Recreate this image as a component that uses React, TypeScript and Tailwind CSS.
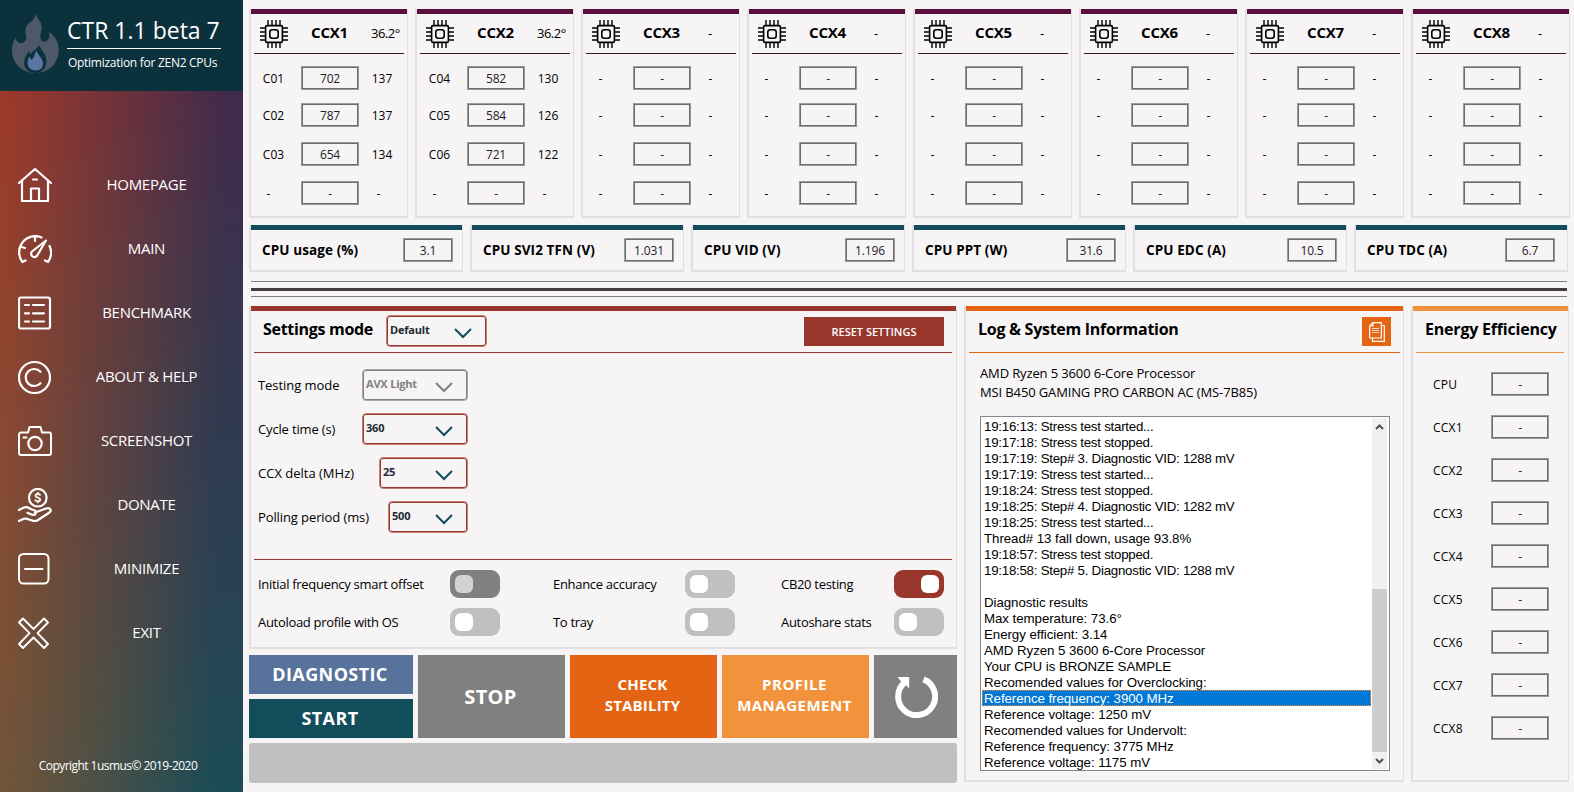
import React from "react";

type Core = { name: string; freq: string; load: string };

const EMPTY: Core = { name: "-", freq: "-", load: "-" };

const ccxList: { title: string; temp: string; cores: Core[] }[] = [
  {
    title: "CCX1",
    temp: "36.2°",
    cores: [
      { name: "C01", freq: "702", load: "137" },
      { name: "C02", freq: "787", load: "137" },
      { name: "C03", freq: "654", load: "134" },
      EMPTY,
    ],
  },
  {
    title: "CCX2",
    temp: "36.2°",
    cores: [
      { name: "C04", freq: "582", load: "130" },
      { name: "C05", freq: "584", load: "126" },
      { name: "C06", freq: "721", load: "122" },
      EMPTY,
    ],
  },
  ...["CCX3", "CCX4", "CCX5", "CCX6", "CCX7", "CCX8"].map((title) => ({
    title,
    temp: "-",
    cores: [EMPTY, EMPTY, EMPTY, EMPTY],
  })),
];

const sensors = [
  { label: "CPU usage (%)", value: "3.1" },
  { label: "CPU SVI2 TFN (V)", value: "1.031" },
  { label: "CPU VID (V)", value: "1.196" },
  { label: "CPU PPT (W)", value: "31.6" },
  { label: "CPU EDC (A)", value: "10.5" },
  { label: "CPU TDC (A)", value: "6.7" },
];

const logLines = [
  "19:16:13: Stress test started...",
  "19:17:18: Stress test stopped.",
  "19:17:19: Step# 3. Diagnostic VID: 1288 mV",
  "19:17:19: Stress test started...",
  "19:18:24: Stress test stopped.",
  "19:18:25: Step# 4. Diagnostic VID: 1282 mV",
  "19:18:25: Stress test started...",
  "Thread# 13 fall down, usage 93.8%",
  "19:18:57: Stress test stopped.",
  "19:18:58: Step# 5. Diagnostic VID: 1288 mV",
  "",
  "Diagnostic results",
  "Max temperature: 73.6°",
  "Energy efficient: 3.14",
  "AMD Ryzen 5 3600 6-Core Processor",
  "Your CPU is BRONZE SAMPLE",
  "Recomended values for Overclocking:",
  "Reference frequency: 3900 MHz",
  "Reference voltage: 1250 mV",
  "Recomended values for Undervolt:",
  "Reference frequency: 3775 MHz",
  "Reference voltage: 1175 mV",
];
const selectedLine = 17;

const NavIcon = ({ children }: { children: React.ReactNode }) => (
  <svg
    className="w-[34px] h-[34px] shrink-0"
    viewBox="0 0 34 34"
    fill="none"
    stroke="white"
    strokeWidth="2.2"
    strokeLinecap="round"
    strokeLinejoin="round"
  >
    {children}
  </svg>
);

const navItems = [
  {
    label: "HOMEPAGE",
    icon: (
      <NavIcon>
        <path d="M1 15 17 1l16 14M4 13v20h26V13M13 33V20.5h8V33M15 11.5h4" />
      </NavIcon>
    ),
  },
  {
    label: "MAIN",
    icon: (
      <NavIcon>
        <path d="M23.5 5.5A16 16 0 0 0 4.5 30l3-1.5M31.5 14a16 16 0 0 1-1.5 16l-3-1.5M17 5v4M3.5 15l3.5 1" />
        <path d="M28 8.500 14 19.500a3.300 3.300 0 1 0 5 4.300Z" />
      </NavIcon>
    ),
  },
  {
    label: "BENCHMARK",
    icon: (
      <NavIcon>
        <rect x="1" y="1.5" width="31" height="31" rx="2" />
        <path d="M7 9h4M15 9h11M7 17.3h4M15 17.3h11M7 25.5h4M15 25.5h11" />
      </NavIcon>
    ),
  },
  {
    label: "ABOUT & HELP",
    icon: (
      <NavIcon>
        <circle cx="16.5" cy="17.5" r="15.5" />
        <path d="M22.5 11.8a8.5 8.5 0 1 0 0 11.4" />
      </NavIcon>
    ),
  },
  {
    label: "SCREENSHOT",
    icon: (
      <NavIcon>
        <path
          d="M3 8.5h7l1.500-5.500h11L24 8.500h7a2 2 0 0 1 2 2V29a2 2 0 0 1-2 2H3a2 2 0 0 1-2-2V10.500a2 2 0 0 1 2-2ZM5.500 13.500h3"
          strokeWidth="2"
        />
        <circle cx="17" cy="19.5" r="6.7" />
      </NavIcon>
    ),
  },
  {
    label: "DONATE",
    icon: (
      <NavIcon>
        <circle cx="19.8" cy="9.7" r="8.8" />
        <path
          d="M22 6.800c-1-1.200-4.500-1.200-4.500.9 0 2.300 4.700 1.400 4.700 3.800 0 2.200-3.700 2.200-4.900.7M19.800 4.800v1.100M19.800 13.100v1.200"
          strokeWidth="1.8"
        />
        <path d="M.8 22 6 19.500c4-1.500 6 2 9.500 2.500 3 .3 3 4.500 0 4.800-2 .1-4-1-6-2M17 24.500l11-4c4-1.500 6 2 3.500 4L20 32c-2 1.200-4 1.300-6 .5-4-1.500-6-2.500-8-1.800L.8 33" />
      </NavIcon>
    ),
  },
  {
    label: "MINIMIZE",
    icon: (
      <NavIcon>
        <rect x="1" y="2" width="29.5" height="29.5" rx="4.5" strokeWidth="2" />
        <path d="M7 17h17.5" strokeWidth="2" />
      </NavIcon>
    ),
  },
  {
    label: "EXIT",
    icon: (
      <NavIcon>
        <path
          d="M1 6.500 5 2.500 15.500 13 26 2.500l4 4L19.500 17.200 30 28l-4 4L15.500 21.500 5 32l-4-4L11.500 17.200Z"
          strokeWidth="1.9"
        />
      </NavIcon>
    ),
  },
];

const Flame = () => (
  <svg className="w-[47px] h-[60px] shrink-0" viewBox="0 0 47 60">
    <path
      d="M23.500 0c1 6 6.500 8 6.300 15-.1 3-1.800 6-1.500 10 .3 3 3.500 4.500 6.200 3 2.500-1.500 3.500-5 2.500-9 6 4 9.700 10.500 9.700 18C46.700 50 37 60 23.400 60S0 50 0 37.500C0 32 1.500 27.500 4 24.500c0 4 2.500 6 5.500 5.500 4-.6 5.500-4 4.500-7.500C12 15 15 11.500 18.500 9c3-2.200 5-5 5-9Z"
      fill="#4d5968"
    />
    <path
      d="M27.500 32c.3 4 4.500 6.500 6 11 3 9-2 17-10 17s-13.500-6-10.500-15c.8-2.500 2.500-3.500 3.200-6.500 1.300.8 2 1.700 2.500 2.800C20 38 24 37 27.500 32Z"
      fill="#0b313c"
    />
    <path
      d="M24.500 37c0 4 6.500 8 6.500 13.500 0 4.500-3 7-7.500 7S15.500 54.500 15.500 50c0-2.500 1-4 1.500-6.500 1.500.7 2 2 2 3.500 3-1.500 3.500-5.500 5.500-10Z"
      fill="#5b76a3"
    />
  </svg>
);

const ChipIcon = () => (
  <svg className="w-7 h-7 shrink-0" viewBox="0 0 28 28" fill="none" stroke="black" strokeWidth="1.6">
    <rect x="5.6" y="5.6" width="16.8" height="16.8" rx="1.5" />
    <rect x="9.8" y="9.8" width="8.4" height="8.4" rx="2.4" />
    <path
      d="M8 0v5M12 0v5M16 0v5M20 0v5M8 23v5M12 23v5M16 23v5M20 23v5"
      strokeWidth="1.4"
    />
    <path
      d="M0 8h5M0 12h5M0 16h5M0 20h5M23 8h5M23 12h5M23 16h5M23 20h5"
      strokeWidth="1.4"
    />
  </svg>
);

const ValueBox = ({ className = "", children }: { className?: string; children: React.ReactNode }) => (
  <span
    className={`h-6 flex items-center justify-center border border-[#9a9a9a] inset-ring inset-ring-[#6c6c6c] pt-px text-[12px] font-medium tracking-[-0.15px] text-[#1c2228] ${className}`}
  >
    {children}
  </span>
);

const Panel = ({
  bar,
  className = "",
  children,
}: {
  bar: string;
  className?: string;
  children: React.ReactNode;
}) => (
  <section className={`flex flex-col border-l-2 border-r border-b-2 border-[#e1dfe1] ${className}`}>
    <div className={`h-[5px] shrink-0 ${bar}`} />
    {children}
  </section>
);

const Select = ({
  value,
  className,
  disabled = false,
}: {
  value: string;
  className: string;
  disabled?: boolean;
}) => (
  <div
    className={`h-8 flex items-center justify-between pl-[3px] pr-[14px] rounded-[4px] border inset-ring ${
      disabled
        ? "border-[#a8a8a8] inset-ring-[#808080] text-[#808080]"
        : "border-[#c27f77] inset-ring-[#98362b] text-[#222a33]"
    } ${className}`}
  >
    <span className="text-[11px] font-bold leading-4 pb-[2px] tracking-[-0.2px]">{value}</span>
    <svg
      className={`w-[18px] h-[11px] mt-1 ${disabled ? "text-[#808080]" : "text-[#114d5c]"}`}
      viewBox="0 0 18 11"
      fill="none"
      stroke="currentColor"
      strokeWidth="2"
    >
      <path d="M1 1l8 8 8-8" />
    </svg>
  </div>
);

const Toggle = ({ label, state = "off" }: { label: string; state?: "off" | "on" | "disabled" }) => (
  <div className="flex items-center justify-between h-7">
    <span className="pt-[2px] text-[13px] tracking-[-0.3px]">{label}</span>
    <span
      className={`w-[50px] h-7 rounded-[9px] p-[5px] flex ${
        state === "on" ? "bg-[#98362b] justify-end" : state === "disabled" ? "bg-[#808080]" : "bg-[#c0c0c0]"
      }`}
    >
      <span className={`w-[18px] h-[18px] rounded-[6px] ${state === "disabled" ? "bg-[#d3d3d3]" : "bg-white"}`} />
    </span>
  </div>
);

const Sidebar = () => (
  <aside className="w-[243px] shrink-0 flex flex-col text-white">
    <div className="h-[91px] shrink-0 bg-[#0b313c] flex pl-3 pt-[13px] gap-2">
      <Flame />
      <div className="w-[154px]">
        <h1 className="text-[23px] leading-[35px] h-9 border-b border-white whitespace-nowrap">
          CTR 1.1 beta 7
        </h1>
        <p className="text-[12px] leading-[17px] mt-[5px] pl-px tracking-[-0.28px] whitespace-nowrap">
          Optimization for ZEN2 CPUs
        </p>
      </div>
    </div>

    <div className="relative flex-1 bg-linear-to-b from-[#a0392a] to-[#785636]">
      {/* cool tint fading in towards the right edge */}
      <div className="absolute inset-0 bg-linear-to-b from-[#432b4b] via-[#2f3b50] to-[#1b4c57] [mask-image:linear-gradient(91deg,transparent,black_88%)]" />
      <div className="relative h-full flex flex-col pt-[62px]">
        <nav className="flex flex-col">
          {navItems.map((item) => (
            <a key={item.label} className="h-16 flex items-center pl-[18px]">
              {item.icon}
              <span className="w-[189px] pb-[2px] text-center text-[15px] tracking-[-0.3px]">{item.label}</span>
            </a>
          ))}
        </nav>
        <p className="mt-auto mb-[17px] text-center pr-[7px] text-[12px] leading-[18px] tracking-[-0.55px]">
          Copyright 1usmus© 2019-2020
        </p>
      </div>
    </div>
  </aside>
);

const CcxCard = ({ title, temp, cores }: (typeof ccxList)[number]) => (
  <Panel bar="bg-[#5c0f3e]" className="w-[159px] h-[209px]">
    <div className="mx-[3px] h-10 shrink-0 border-b border-[#3f1230] flex items-center pl-[6px]">
      <ChipIcon />
      <h2 className="w-[83px] mr-[2px] pb-[2px] text-center text-[15px] font-bold tracking-[-0.2px]">{title}</h2>
      <span className={`text-[13px] tracking-[-0.5px] ${temp === "-" ? "pl-[3px]" : "-ml-[2px]"}`}>{temp}</span>
    </div>
    <div className="grid grid-rows-[37px_39px_39px_24px] pt-3 pl-2">
      {cores.map((core, i) => (
        <div key={i} className="flex items-center h-6">
          <span className={`pt-[2px] text-[12px] text-center ${core.name === "-" ? "w-[19px]" : "w-[29px]"}`}>
            {core.name}
          </span>
          <ValueBox className={`w-[58px] ${core.name === "-" ? "ml-[23px]" : "ml-[13px]"}`}>{core.freq}</ValueBox>
          <span className={`pt-[2px] text-[12px] text-center ${core.load === "-" ? "w-[39px]" : "w-[46px]"}`}>
            {core.load}
          </span>
        </div>
      ))}
    </div>
  </Panel>
);

const SettingsPanel = () => (
  <Panel bar="bg-[#98362b]" className="h-[343px]">
    <div className="ml-[3px] mr-[4px] h-[42px] shrink-0 border-b border-[#98362b] flex items-center pl-[9px] pr-2">
      <h2 className="text-[16px] font-bold tracking-[-0.3px] w-[123px] pb-[5px] whitespace-nowrap">Settings mode</h2>
      <Select value="Default" className="w-[101px] mb-px" />
      <button className="ml-auto w-[140px] h-[29px] pt-px bg-[#98362b] text-white text-[11px] font-semibold">
        RESET SETTINGS
      </button>
    </div>

    <div className="flex flex-col gap-3 pt-4 pl-[7px] w-[217px] text-[13px]">
      <div className="flex items-center justify-between">
        <span className="pt-[2px] tracking-[-0.05px]">Testing mode</span>
        <Select value="AVX Light" className="w-[106px]" disabled />
      </div>
      <div className="flex items-center justify-between">
        <span className="pt-[2px] tracking-[-0.15px]">Cycle time (s)</span>
        <Select value="360" className="w-[106px]" />
      </div>
      <div className="flex items-center justify-between">
        <span className="pt-[2px]">CCX delta (MHz)</span>
        <Select value="25" className="w-[89px]" />
      </div>
      <div className="flex items-center justify-between">
        <span className="pt-[2px] tracking-[-0.1px]">Polling period (ms)</span>
        <Select value="500" className="w-[80px]" />
      </div>
    </div>

    <div className="ml-[3px] mr-[4px] mt-[26px] border-t border-[#98362b]" />
    <div className="flex pl-[7px] pt-[10px]">
      <div className="w-[242px] mr-[53px] flex flex-col gap-[10px]">
        <Toggle label="Initial frequency smart offset" state="disabled" />
        <Toggle label="Autoload profile with OS" />
      </div>
      <div className="w-[182px] mr-[46px] flex flex-col gap-[10px]">
        <Toggle label="Enhance accuracy" />
        <Toggle label="To tray" />
      </div>
      <div className="w-[163px] flex flex-col gap-[10px]">
        <Toggle label="CB20 testing" state="on" />
        <Toggle label="Autoshare stats" />
      </div>
    </div>
  </Panel>
);

const Actions = () => (
  <div className="mt-[6px] h-[83px] flex gap-[5px] text-white font-bold">
    <div className="w-[164px] flex flex-col gap-[5px] text-[18px] tracking-[0.4px]">
      <button className="h-[39px] pr-[2px] bg-[#58739b]">DIAGNOSTIC</button>
      <button className="h-[39px] pr-[2px] bg-[#114d5b]">START</button>
    </div>
    <button className="w-[147px] pr-[2px] bg-[#808080] text-[20px] tracking-[0.3px]">STOP</button>
    <button className="w-[147px] pr-[2px] pb-[3px] bg-[#e46414] text-[15px] tracking-[0.2px] leading-[21px]">
      CHECK
      <br />
      STABILITY
    </button>
    <button className="w-[147px] pr-[2px] pb-[3px] bg-[#f2923c] text-[15px] tracking-[0.5px] leading-[21px]">
      PROFILE
      <br />
      MANAGEMENT
    </button>
    <button className="w-[83px] bg-[#808080] flex items-center justify-center pl-[2px]">
      <svg className="w-[43px] h-[43px]" viewBox="0 0 43 43">
        <path d="M28.5 4.4A18.5 18.5 0 1 1 10 7.2" fill="none" stroke="white" strokeWidth="6" />
        <path d="M2.5 2h11.7v11.5L10.5 9.500 6.5 7Z" fill="white" />
      </svg>
    </button>
  </div>
);

const LogPanel = () => (
  <Panel bar="bg-[#e46414]" className="w-[440px] h-[476px]">
    <div className="mx-[3px] h-[42px] shrink-0 border-b border-[#e46414] flex items-center justify-between pl-[9px] pr-[9px]">
      <h2 className="text-[16px] font-bold tracking-[-0.28px] pb-[5px]">Log &amp; System Information</h2>
      <button className="w-[29px] h-[29px] bg-[#e46414] flex items-center justify-center">
        <svg className="w-4 h-5" viewBox="0 0 16 20" fill="none" stroke="white" strokeWidth="1.2">
          <path d="M4 .7h8.300V16H.700V4Z" />
          <path d="M.7 4H4V.7M12.500 3.500h2.800v15.800H3.500V16" />
          <path d="M3 6.500h7M3 8.500h7M3 10.500h7" opacity=".75" />
        </svg>
      </button>
    </div>
    <div className="pl-[14px] pt-[11px] text-[13px] leading-[19px] tracking-[-0.13px]">
      <p>AMD Ryzen 5 3600 6-Core Processor</p>
      <p>MSI B450 GAMING PRO CARBON AC (MS-7B85)</p>
    </div>
    <div className="ml-[14px] mt-[14px] w-[410px] h-[355px] border border-[#828790] bg-white flex p-px pr-[2px]">
      <ul className="flex-1 font-['Liberation_Sans',sans-serif] text-[13.3px] leading-[18px]">
        {logLines.map((line, i) => (
          <li
            key={i}
            className={`h-4 pl-[2px] whitespace-pre ${
              line.startsWith("19:") ? "tracking-[-0.25px]" : "tracking-[-0.06px]"
            } ${
              i === selectedLine
                ? "bg-[#0078d7] text-white outline-1 -outline-offset-1 outline-dotted outline-[#ff8728]"
                : ""
            }`}
          >
            {line}
          </li>
        ))}
      </ul>
      <div className="ml-px w-[15px] bg-[#f0f0f0] flex flex-col items-center">
        <svg className="w-[9px] h-[17px]" viewBox="0 0 9 17" fill="none" stroke="#505050" strokeWidth="2">
          <path d="M1 11l3.5-3.5L8 11" />
        </svg>
        <div className="mt-auto w-full h-[163px] bg-[#cdcdcd]" />
        <svg className="w-[9px] h-[17px]" viewBox="0 0 9 17" fill="none" stroke="#505050" strokeWidth="2">
          <path d="M1 7l3.5 3.5L8 7" />
        </svg>
      </div>
    </div>
  </Panel>
);

const EnergyPanel = () => (
  <Panel bar="bg-[#f2923c]" className="w-[158px] h-[476px]">
    <div className="ml-[3px] mr-[4px] h-[42px] shrink-0 border-b border-[#f2923c] flex items-center pl-[9px]">
      <h2 className="text-[16px] font-bold tracking-[-0.2px] pb-[5px] whitespace-nowrap">Energy Efficiency</h2>
    </div>
    <div className="flex flex-col gap-[19px] pt-[19px] pl-5 pr-[19px]">
      {["CPU", "CCX1", "CCX2", "CCX3", "CCX4", "CCX5", "CCX6", "CCX7", "CCX8"].map((name) => (
        <div key={name} className="flex items-center justify-between h-6">
          <span className="pt-[2px] text-[12px] tracking-[0.2px]">{name}</span>
          <ValueBox className="w-[58px]">-</ValueBox>
        </div>
      ))}
    </div>
  </Panel>
);

const App = () => {
  return (
    <div className="w-[1574px] h-[792px] overflow-hidden flex bg-[#f6f4f5] text-black font-['Open_Sans','Noto_Sans',sans-serif]">
      <Sidebar />
      <main className="flex-1 pl-[6px] pt-[9px] flex flex-col">
        <div className="flex gap-[7px]">
          {ccxList.map((ccx) => (
            <CcxCard key={ccx.title} {...ccx} />
          ))}
        </div>

        <div className="flex gap-[7px] mt-[7px]">
          {sensors.map((s) => (
            <Panel key={s.label} bar="bg-[#114d5b]" className="w-[214px] h-[47px]">
              <div className="flex items-center justify-between pl-[11px] pr-[9px] pt-2">
                <h3 className="text-[13.5px] leading-5 font-bold pb-px tracking-[0.1px]">{s.label}</h3>
                <ValueBox className={s.label === "CPU TDC (A)" ? "w-[50px] mr-[3px]" : "w-[50px]"}>{s.value}</ValueBox>
              </div>
            </Panel>
          ))}
        </div>

        <div className="ml-[2px] mt-[9px] mb-[9px] w-[1316px] h-4 border-y border-[#808080] flex items-center">
          <div className="w-full h-[3px] bg-[#423e40]" />
        </div>

        <div className="flex gap-[7px]">
          <div className="w-[708px]">
            <SettingsPanel />
            <Actions />
            <div className="mt-[5px] h-10 rounded-[3px] bg-[#c0c0c0]" />
          </div>
          <LogPanel />
          <EnergyPanel />
        </div>
      </main>
    </div>
  );
};

export default App;
